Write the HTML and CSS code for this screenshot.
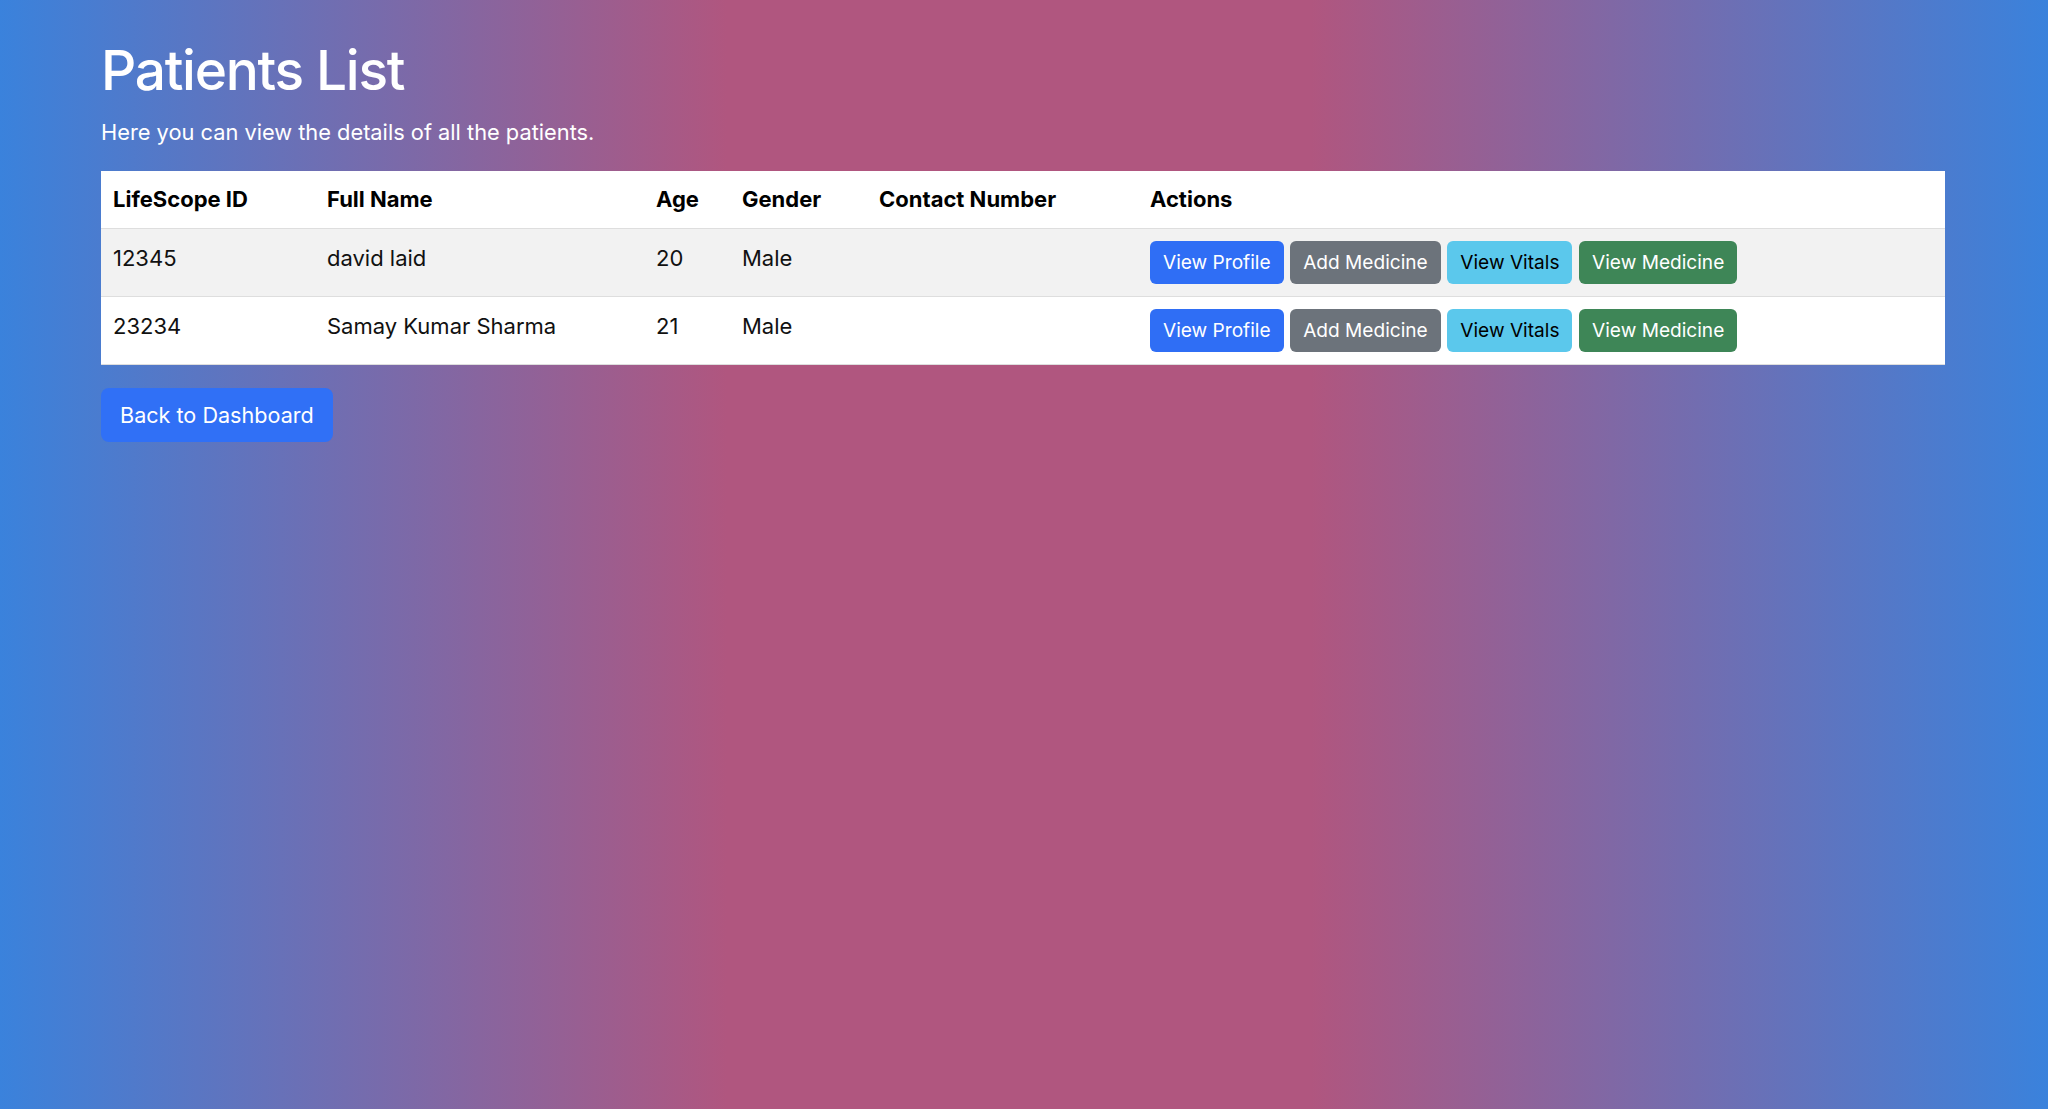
FILE: index.html
```html
<!DOCTYPE html>
<html lang="en">
<head>
<meta charset="utf-8">
<title>Patients List</title>
<link rel="stylesheet" href="styles.css">
</head>
<body>
<main class="page">
  <h1 class="title">Patients List</h1>
  <p class="lead">Here you can view the details of all the patients.</p>
  <table class="patients">
    <thead>
      <tr>
        <th class="c-id">LifeScope ID</th>
        <th class="c-name">Full Name</th>
        <th class="c-age">Age</th>
        <th class="c-gender">Gender</th>
        <th class="c-contact">Contact Number</th>
        <th class="c-actions">Actions</th>
      </tr>
    </thead>
    <tbody>
      <tr class="striped">
        <td>12345</td>
        <td>david laid</td>
        <td>20</td>
        <td>Male</td>
        <td></td>
        <td class="actions">
          <div class="btn-row">
            <a class="btn btn-primary">View Profile</a>
            <a class="btn btn-secondary">Add Medicine</a>
            <a class="btn btn-info">View Vitals</a>
            <a class="btn btn-success">View Medicine</a>
          </div>
        </td>
      </tr>
      <tr>
        <td>23234</td>
        <td>Samay Kumar Sharma</td>
        <td>21</td>
        <td>Male</td>
        <td></td>
        <td class="actions">
          <div class="btn-row">
            <a class="btn btn-primary">View Profile</a>
            <a class="btn btn-secondary">Add Medicine</a>
            <a class="btn btn-info">View Vitals</a>
            <a class="btn btn-success">View Medicine</a>
          </div>
        </td>
      </tr>
    </tbody>
  </table>
  <a class="btn-back">Back to Dashboard</a>
</main>
</body>
</html>
```

FILE: styles.css
```css
html, body {
  margin: 0;
  padding: 0;
}

body {
  min-height: 1109px;
  font-family: Inter, "Noto Sans", "Liberation Sans", sans-serif;
  color: #111;
  background: linear-gradient(to right,
    #3a82dc 0%,
    #b0567f 35.5%,
    #b0567f 64%,
    #3a82dc 100%);
}

.page {
  padding: 36px 103px 0 101px;
  display: flex;
  flex-direction: column;
  align-items: flex-start;
}

.title {
  margin: 0;
  font-size: 55px;
  line-height: 69.6px;
  font-weight: 500;
  letter-spacing: -1.3px;
  color: #fff;
}

.lead {
  margin: 9px 0 22.3px 0;
  font-size: 21.8px;
  line-height: 34.5px;
  color: #fff;
}

.patients {
  width: 100%;
  border-collapse: collapse;
  table-layout: fixed;
  background: #fff;
  font-size: 22px;
}

.patients th,
.patients td {
  box-sizing: border-box;
  text-align: left;
  padding: 12.5px 12px 11px 12px;
  line-height: 33px;
  vertical-align: top;
  border-bottom: 1px solid #dedede;
}

.patients th {
  font-weight: 700;
  color: #000;
  vertical-align: bottom;
  padding: 12px 12px 11.7px 12px;
}

.c-id { width: 214px; }
.c-name { width: 329px; }
.c-age { width: 86px; }
.c-gender { width: 137px; }
.c-contact { width: 271px; }

.patients tr.striped td {
  background: #f2f2f2;
}

.patients td.actions {
  padding: 11.7px 12px 12px 12px;
}

.btn-row {
  display: flex;
  gap: 6.6px;
}

.btn {
  display: inline-block;
  height: 43.3px;
  box-sizing: border-box;
  padding: 0 13px;
  line-height: 43.3px;
  font-size: 19.1px;
  border-radius: 6px;
  color: #fff;
  white-space: nowrap;
}

.btn-primary { background: #2f6ef5; }
.btn-secondary { background: #6c737b; }
.btn-info { background: #5bc8ec; color: #000; }
.btn-success { background: #3e8657; }

.btn-back {
  margin-top: 23px;
  display: inline-block;
  height: 54px;
  line-height: 54px;
  box-sizing: border-box;
  padding: 0 19px;
  font-size: 21.6px;
  color: #fff;
  background: #3070f6;
  border-radius: 8px;
}
```
